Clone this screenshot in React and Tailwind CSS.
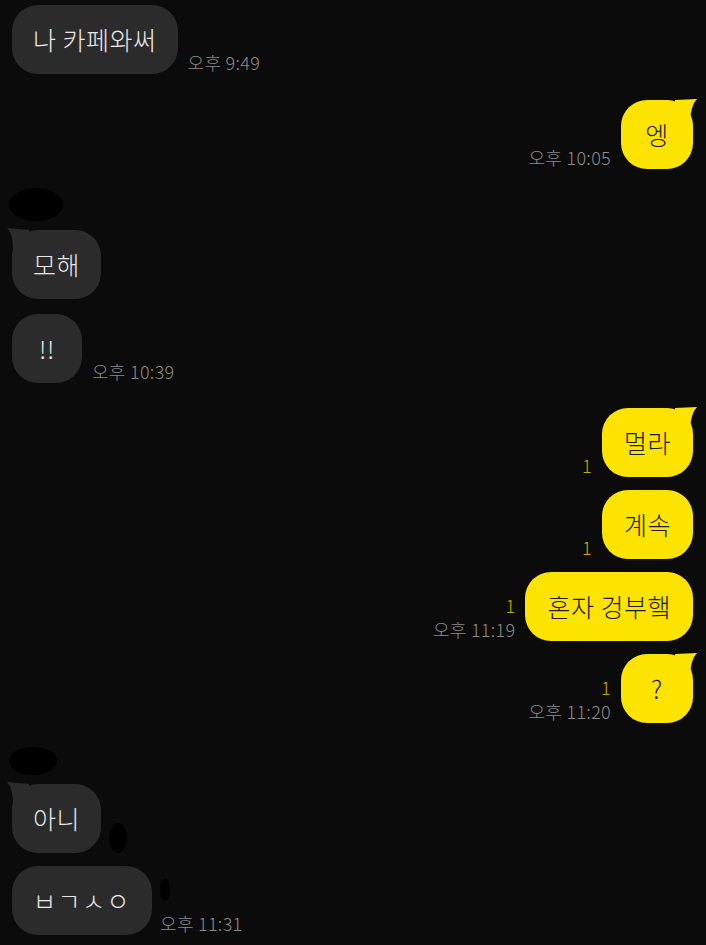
import React from "react";

const font = { fontFamily: '"Noto Sans CJK KR", "Noto Sans", sans-serif' };

function Tail({ side, color }) {
  if (side === "right") {
    return (
      <svg className="absolute -right-[4px] -top-[1px]" width="22" height="22" viewBox="0 0 22 22">
        <path d="M0 1 L22 0 Q16 6 15 22 L0 22 Z" fill={color} />
      </svg>
    );
  }
  return (
    <svg className="absolute -left-[5px] -top-[2px]" width="22" height="22" viewBox="0 0 22 22">
      <path d="M22 2 L0 0 Q6 6 6 22 L22 22 Z" fill={color} />
    </svg>
  );
}

function Meta({ read, time, align }) {
  return (
    <div className={`flex flex-col ${align === "right" ? "items-end" : "items-start"} text-[18px] font-light leading-[24px] tracking-[0.3px]`}>
      {read ? <span className="text-[#c8b000]">{read}</span> : null}
      {time ? <span className="text-[#8b8b8b]">{time}</span> : null}
    </div>
  );
}

function Mine({ text, read, time, tail, className = "" }) {
  return (
    <div className={`flex items-end justify-end gap-[10px] pr-[13px] ${className}`}>
      <Meta read={read} time={time} align="right" />
      <div className="relative flex h-[69px] min-w-[72px] items-center justify-center rounded-[26px] bg-[#fde300] px-[22px] text-[25px] font-light tracking-[0.5px] text-[#1b1b12]">
        {tail ? <Tail side="right" color="#fde300" /> : null}
        <span className="relative">{text}</span>
      </div>
    </div>
  );
}

function Theirs({ text, time, tail, className = "", after, wide }) {
  return (
    <div className={`flex items-end gap-[10px] pl-[12px] ${className}`}>
      <div className={`relative flex h-[69px] min-w-[70px] items-center justify-center rounded-[26px] bg-[#2b2b2b] px-[21px] text-[25px] font-light text-[#e8e8e8] ${wide ? "tracking-[1.5px]" : "tracking-[0.5px]"}`}>
        {tail ? <Tail side="left" color="#2b2b2b" /> : null}
        <span className="relative">{text}</span>
      </div>
      {after}
      {time ? <Meta time={time} align="left" /> : null}
    </div>
  );
}

export default function App() {
  return (
    <div className="h-[945px] w-[706px] overflow-hidden bg-[#0b0b0b] pt-[5px]" style={font}>
      <Theirs text="나 카페와써" time="오후 9:49" />
      <Mine text="엥" time="오후 10:05" tail className="mt-[26px]" />

      <div className="ml-[9px] mt-[19px] h-[33px] w-[54px] rounded-[50%] bg-black" />
      <Theirs text="모해" tail className="mt-[9px]" />
      <Theirs text="!!" time="오후 10:39" className="mt-[15px]" />

      <Mine text="멀라" read="1" tail className="mt-[25px]" />
      <Mine text="계속" read="1" className="mt-[13px]" />
      <Mine text="혼자 겅부햌" read="1" time="오후 11:19" className="mt-[13px]" />
      <Mine text="?" read="1" time="오후 11:20" tail className="mt-[13px]" />

      <div className="ml-[9px] mt-[24px] h-[28px] w-[48px] rounded-[50%] bg-black" />
      <Theirs
        text="아니"
        tail
        className="mt-[9px]"
        after={<div className="ml-[-2px] h-[30px] w-[18px] self-end rounded-[50%] bg-black" />}
      />
      <Theirs
        text="ㅂㄱㅅㅇ"
        wide
        time="오후 11:31"
        className="mt-[13px]"
        after={<div className="mb-[34px] ml-[-2px] mr-[-20px] h-[22px] w-[10px] rounded-[50%] bg-black" />}
      />
    </div>
  );
}
